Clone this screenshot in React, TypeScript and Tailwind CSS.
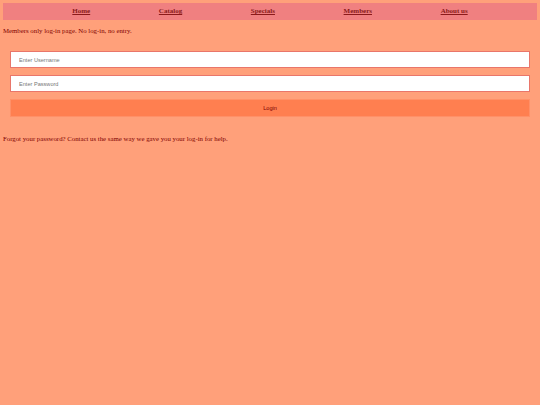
import { useState } from "react";

const LINKS = ["Home", "Catalog", "Specials", "Members", "About us"];

export default function App() {
  const [user, setUser] = useState("");
  const [pass, setPass] = useState("");

  return (
    <div className="min-h-[405px] bg-[#ffa07a] px-[3px] pt-[3px] font-['Liberation_Serif',serif] text-[6.8px] text-[#800000]">
      {/* nav bar */}
      <nav className="flex h-[17px] items-center bg-[#f08080] px-[35px] text-[7px]">
        {LINKS.map((l) => (
          <a
            key={l}
            href="#"
            className="flex-auto text-center font-bold text-[#8b1a1a] underline"
          >
            {l}
          </a>
        ))}
      </nav>

      <p className="mt-[6px] leading-[9px]">Members only log-in page. No log-in, no entry.</p>

      <form
        className="mt-[16px] flex flex-col gap-[7px] px-[7px]"
        onSubmit={(e) => e.preventDefault()}
      >
        <input
          value={user}
          onChange={(e) => setUser(e.target.value)}
          placeholder="Enter Username"
          className="h-[17px] border border-[#e9766a] bg-white px-[8px] font-['Liberation_Sans',sans-serif] text-[5.6px] text-black outline-none placeholder:text-[#777]"
        />
        <input
          type="password"
          value={pass}
          onChange={(e) => setPass(e.target.value)}
          placeholder="Enter Password"
          className="h-[17px] border border-[#e9766a] bg-white px-[8px] font-['Liberation_Sans',sans-serif] text-[5.6px] text-black outline-none placeholder:text-[#777]"
        />
        <button
          type="submit"
          className="h-[18px] border border-[#ff9068] bg-[#ff7f50] font-['Liberation_Sans',sans-serif] text-[5.6px] text-[#800000]"
        >
          Login
        </button>
      </form>

      <p className="mt-[17px] leading-[9px]">
        Forgot your password? Contact us the same way we gave you your log-in for help.
      </p>
    </div>
  );
}
